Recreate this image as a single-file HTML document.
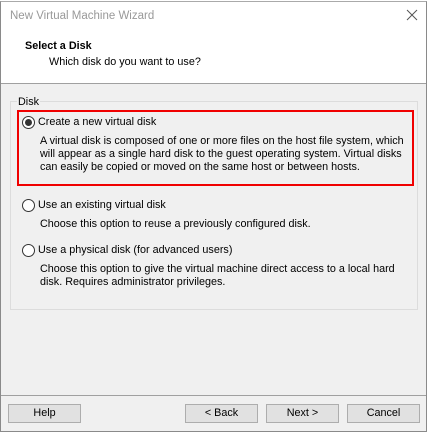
<!DOCTYPE html>
<html><head><style>
body{margin:0;width:430px;height:431px;background:#fff;position:relative;overflow:hidden;font-family:"Liberation Sans",sans-serif;font-size:10.8px;color:#000}
.a{position:absolute;white-space:nowrap}
.win{position:absolute;left:0;top:1px;width:425px;height:429px;border:1px solid #8a8a8a;border-top:1px solid #aaa;background:#f0f0f0}
.btn{position:absolute;top:404px;width:71px;height:17px;border:1px solid #adadad;background:#e1e1e1;text-align:center;line-height:17px}
.r{position:absolute;width:11px;height:11px;border:1px solid #333;border-radius:50%;background:#fff}
</style></head><body>
<div class="win"></div>
<div class="a" style="left:1px;top:2px;width:425px;height:81px;background:#fff;border-bottom:1px solid #a0a0a0"></div>
<div class="a" style="left:10px;top:10px;color:#999;font-size:11.5px">New Virtual Machine Wizard</div>
<svg class="a" style="left:406px;top:9px" width="12" height="12"><path d="M1 1L11 11M11 1L1 11" stroke="#555" stroke-width="1"/></svg>
<div class="a" style="left:25px;top:40px;font-weight:bold">Select a Disk</div>
<div class="a" style="left:49px;top:56px">Which disk do you want to use?</div>
<div class="a" style="left:10px;top:101px;width:406px;height:207px;border:1px solid #dcdcdc"></div>
<div class="a" style="left:17px;top:96px;background:#f0f0f0;padding:0 1px">Disk</div>
<div class="a" style="left:17px;top:110px;width:393px;height:72px;border:2px solid #f00000"></div>
<div class="r" style="left:22px;top:116px"><div style="position:absolute;left:2px;top:2px;width:7px;height:7px;border-radius:50%;background:#333"></div></div>
<div class="a" style="left:38px;top:116px">Create a new virtual disk</div>
<div class="a" style="left:40px;top:135px;line-height:13px">A virtual disk is composed of one or more files on the host file system, which<br>will appear as a single hard disk to the guest operating system. Virtual disks<br>can easily be copied or moved on the same host or between hosts.</div>
<div class="r" style="left:22px;top:199px"></div>
<div class="a" style="left:38px;top:199px">Use an existing virtual disk</div>
<div class="a" style="left:40px;top:218px">Choose this option to reuse a previously configured disk.</div>
<div class="r" style="left:22px;top:244px"></div>
<div class="a" style="left:38px;top:244px">Use a physical disk (for advanced users)</div>
<div class="a" style="left:40px;top:263px;line-height:13px">Choose this option to give the virtual machine direct access to a local hard<br>disk. Requires administrator privileges.</div>
<div class="a" style="left:1px;top:395px;width:425px;border-top:1px solid #a0a0a0"></div>
<div class="btn" style="left:8px">Help</div>
<div class="btn" style="left:185px">&lt; Back</div>
<div class="btn" style="left:266px">Next &gt;</div>
<div class="btn" style="left:347px">Cancel</div>
</body></html>
